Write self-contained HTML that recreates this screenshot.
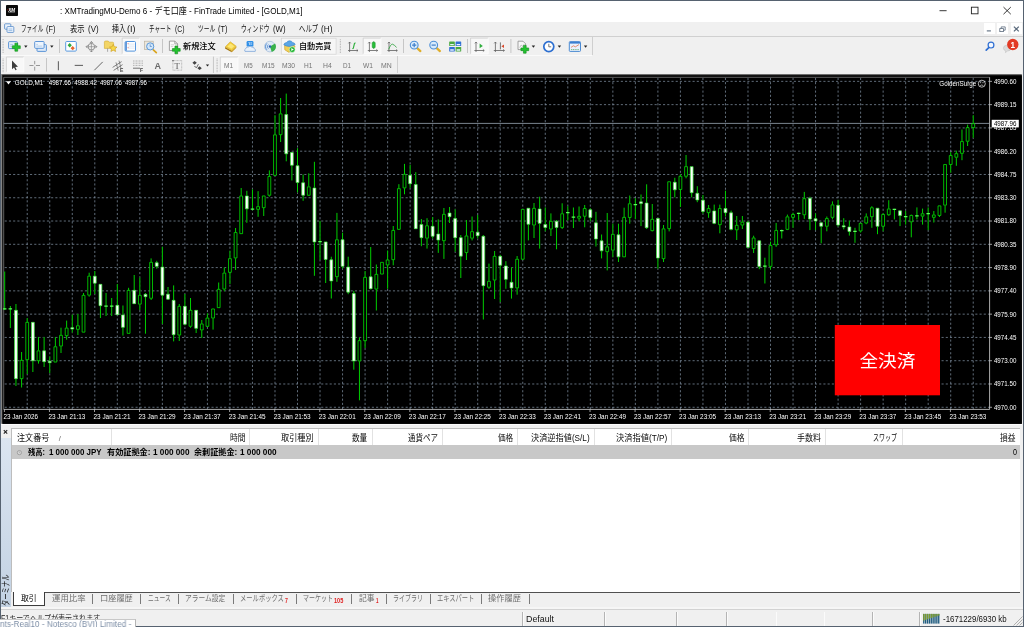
<!DOCTYPE html>
<html lang="ja"><head><meta charset="utf-8"><title>MT4</title>
<style>
html,body{margin:0;padding:0;}
body{width:1024px;height:627px;position:relative;overflow:hidden;background:#566270;font-family:"Liberation Sans","Noto Sans CJK JP",sans-serif;}
.t{position:absolute;white-space:nowrap;transform-origin:0 50%;}
.b{position:absolute;}
svg{position:absolute;overflow:visible;}
#w{position:absolute;left:0;top:0;width:1024px;height:627px;will-change:transform;filter:blur(0.3px);}
</style></head><body><div id="w">
<div class="b" style="left:0.00px;top:0.00px;width:1024.00px;height:627.00px;background:#566270;"></div>
<div class="b" style="left:1.00px;top:1.00px;width:1021.60px;height:21.00px;background:#ffffff;"></div>
<div class="b" style="left:1.00px;top:22.00px;width:1021.60px;height:604.30px;background:#f0f0f0;"></div>
<div class="b" style="left:6.30px;top:5.00px;width:11.30px;height:11.00px;background:#0a0a0a;border-radius:0.8px;"></div>
<svg style="left:6.3px;top:5px" width="11.4" height="11" viewBox="0 0 11.4 11"><text x="2.2" y="6.6" font-family="Liberation Sans,sans-serif" font-size="4.6" font-weight="bold" font-style="italic" fill="#fff">XM</text><rect x="2.4" y="7.5" width="6.6" height="0.5" fill="#9a9a9a"/><rect x="1.4" y="4.4" width="0.9" height="0.9" fill="#e02020"/></svg>
<span class="t" style="left:59.80px;top:3.76px;font-size:9.3px;line-height:14.88px;color:#000;transform:scaleX(0.8698);">: XMTradingMU-Demo 6 - デモ口座 - FinTrade Limited - [GOLD,M1]</span>
<svg style="left:930px;top:1px" width="92" height="21" viewBox="930 1 92 21"><path d="M939.5 10.7H946.6" stroke="#222" stroke-width="0.9" fill="none"/><rect x="971.4" y="7.2" width="6.6" height="6.6" stroke="#222" stroke-width="0.9" fill="none"/><path d="M1003.5 7.1L1010.8 14.2M1010.8 7.1L1003.5 14.2" stroke="#222" stroke-width="0.9" fill="none"/></svg>
<svg style="left:4px;top:23px" width="11" height="11" viewBox="0 0 11 11"><rect x="0.6" y="0.8" width="6.2" height="5.4" rx="0.8" fill="#eaf2fb" stroke="#4f86c6" stroke-width="0.8"/><rect x="3" y="3.6" width="6.8" height="5.8" rx="0.8" fill="#f4f9ff" stroke="#4f86c6" stroke-width="0.8"/><path d="M4.4 6h4M4.4 7.6h4" stroke="#7aa7d8" stroke-width="0.7"/></svg>
<span class="t" style="left:20.80px;top:22.26px;font-size:8.8px;line-height:14.08px;color:#111;transform:scaleX(0.6306);">ファイル</span>
<span class="t" style="left:46.40px;top:22.66px;font-size:8.3px;line-height:13.28px;color:#111;transform:scaleX(0.8860);">(F)</span>
<span class="t" style="left:69.80px;top:22.26px;font-size:8.8px;line-height:14.08px;color:#111;transform:scaleX(0.8291);">表示</span>
<span class="t" style="left:87.50px;top:22.66px;font-size:8.3px;line-height:13.28px;color:#111;transform:scaleX(0.9582);">(V)</span>
<span class="t" style="left:112.00px;top:22.26px;font-size:8.8px;line-height:14.08px;color:#111;transform:scaleX(0.7837);">挿入</span>
<span class="t" style="left:126.60px;top:22.66px;font-size:8.3px;line-height:13.28px;color:#111;transform:scaleX(1.0964);">(I)</span>
<span class="t" style="left:149.00px;top:22.26px;font-size:8.8px;line-height:14.08px;color:#111;transform:scaleX(0.6352);">チャート</span>
<span class="t" style="left:174.70px;top:22.66px;font-size:8.3px;line-height:13.28px;color:#111;transform:scaleX(0.8238);">(C)</span>
<span class="t" style="left:197.50px;top:22.26px;font-size:8.8px;line-height:14.08px;color:#111;transform:scaleX(0.6514);">ツール</span>
<span class="t" style="left:218.40px;top:22.66px;font-size:8.3px;line-height:13.28px;color:#111;transform:scaleX(0.8860);">(T)</span>
<span class="t" style="left:240.80px;top:22.26px;font-size:8.8px;line-height:14.08px;color:#111;transform:scaleX(0.6500);">ウィンドウ</span>
<span class="t" style="left:273.10px;top:22.66px;font-size:8.3px;line-height:13.28px;color:#111;transform:scaleX(0.9357);">(W)</span>
<span class="t" style="left:298.75px;top:22.26px;font-size:8.8px;line-height:14.08px;color:#111;transform:scaleX(0.7290);">ヘルプ</span>
<span class="t" style="left:321.40px;top:22.66px;font-size:8.3px;line-height:13.28px;color:#111;transform:scaleX(0.9886);">(H)</span>
<div class="b" style="left:984.00px;top:23.00px;width:11.00px;height:11.00px;background:#ffffff;"></div>
<div class="b" style="left:996.90px;top:23.00px;width:11.00px;height:11.00px;background:#ffffff;"></div>
<div class="b" style="left:1010.90px;top:23.00px;width:11.00px;height:11.00px;background:#ffffff;"></div>
<svg style="left:984px;top:23px" width="38" height="11" viewBox="984 23 38 11"><path d="M986.8 30.9H990.9" stroke="#5b6b7d" stroke-width="1.1"/><rect x="999.8" y="28.6" width="3.6" height="3" fill="none" stroke="#5b6b7d" stroke-width="0.8"/><path d="M1001.2 28.4V26.9H1005.2V30.2H1003.6" fill="none" stroke="#5b6b7d" stroke-width="0.8"/><path d="M1013.9 26.6L1018.8 31.4M1018.8 26.6L1013.9 31.4" stroke="#5b6b7d" stroke-width="1.3"/></svg>
<div class="b" style="left:1.00px;top:36.20px;width:1021.60px;height:0.80px;background:#ffffff;"></div>
<div class="b" style="left:1.00px;top:35.60px;width:1021.60px;height:0.70px;background:#d0d0d0;"></div>
<div class="b" style="left:1.00px;top:54.60px;width:591.00px;height:0.70px;background:#cfcfcf;"></div>
<div class="b" style="left:1.00px;top:55.30px;width:591.00px;height:0.60px;background:#fafafa;"></div>
<div class="b" style="left:591.60px;top:37.00px;width:0.70px;height:18.00px;background:#cfcfcf;"></div>
<div class="b" style="left:397.40px;top:56.00px;width:0.70px;height:17.40px;background:#cfcfcf;"></div>
<svg style="left:0px;top:37px" width="1024" height="18" viewBox="0 37 1024 18"><rect x="2.5" y="39.20" width="1.2" height="0.8" fill="#b4b4b4"/><rect x="2.5" y="40.80" width="1.2" height="0.8" fill="#b4b4b4"/><rect x="2.5" y="42.40" width="1.2" height="0.8" fill="#b4b4b4"/><rect x="2.5" y="44.00" width="1.2" height="0.8" fill="#b4b4b4"/><rect x="2.5" y="45.60" width="1.2" height="0.8" fill="#b4b4b4"/><rect x="2.5" y="47.20" width="1.2" height="0.8" fill="#b4b4b4"/><rect x="2.5" y="48.80" width="1.2" height="0.8" fill="#b4b4b4"/><rect x="2.5" y="50.40" width="1.2" height="0.8" fill="#b4b4b4"/><rect x="2.5" y="52.00" width="1.2" height="0.8" fill="#b4b4b4"/><rect x="8.6" y="41.6" width="8.8" height="7" rx="0.8" fill="#e6f0fb" stroke="#4c8ad2" stroke-width="0.9"/><path d="M10.2 44.4h3M10.2 46.2h2" stroke="#8fb4df" stroke-width="0.7"/><path d="M14.9 43.2H17.7V45.800000000000004H20.3V48.6H17.7V51.2H14.9V48.6H12.3V45.800000000000004H14.9Z" fill="#22c22e" stroke="#138a1c" stroke-width="0.6" stroke-linejoin="round"/><path d="M24.1 45.6H27.5L25.8 47.7Z" fill="#222"/><rect x="37" y="44.6" width="9.4" height="6.8" rx="0.8" fill="#dce9f8" stroke="#4c8ad2" stroke-width="0.9"/><rect x="34.7" y="41.5" width="9.4" height="6.8" rx="0.8" fill="#eef5fd" stroke="#4c8ad2" stroke-width="0.9"/><path d="M36.3 44.4h1.5M36.3 46.1h6" stroke="#9bbbe0" stroke-width="0.7"/><path d="M50.099999999999994 45.6H53.5L51.8 47.7Z" fill="#222"/><rect x="59.05" y="39" width="0.75" height="14" fill="#b9b9b9"/><rect x="65.7" y="41.5" width="10.6" height="9.6" rx="0.9" fill="#ffffff" stroke="#5a9ae0" stroke-width="1"/><path d="M67.6 45.3L69.7 43.1L71.8 45.3L69.7 47.4Z" fill="#2fa83a"/><path d="M70.6 48.2L72.7 46L74.8 48.2L72.7 50.3Z" fill="#e8662c"/><circle cx="91.4" cy="46.7" r="3.3" fill="none" stroke="#7c7c7c" stroke-width="0.8"/><path d="M91.4 41.5V52M86.1 46.7H96.8" stroke="#8a8a8a" stroke-width="0.7"/><path d="M89.9 43L91.4 41.5L92.9 43M89.9 50.5L91.4 52L92.9 50.5M87.6 45.2L86.1 46.7L87.6 48.2M95.3 45.2L96.8 46.7L95.3 48.2" stroke="#6e6e6e" stroke-width="0.7" fill="none"/><path d="M104.4 42.2q0-1.2 1.2-1.2h2.6l1 1.2h3.4q1 0 1 1v5.2h-9.2Z" fill="#f3d565" stroke="#d2a92e" stroke-width="0.6"/><path d="M107.6 48.4v3.4" stroke="#8a8a8a" stroke-width="0.7"/><path d="M113.2 44.4l1.2 2.4 2.6.3-1.9 1.8.5 2.6-2.4-1.3-2.3 1.3.5-2.6-1.9-1.8 2.6-.3Z" fill="#f7d84a" stroke="#c9981a" stroke-width="0.6" stroke-linejoin="round"/><rect x="122.2" y="38.1" width="17.39999999999999" height="15.899999999999999" fill="#f8f8f8"/><path d="M122.2 54V38.1H139.6" fill="none" stroke="#c8c8c8" stroke-width="0.7"/><path d="M122.2 54H139.6V38.1" fill="none" stroke="#ffffff" stroke-width="0.7"/><rect x="125.1" y="41.5" width="10.4" height="9.6" rx="1" fill="#ffffff" stroke="#4a8fdc" stroke-width="0.950"/><rect x="125.5" y="42" width="1.300" height="8.6" fill="#3b7fd0"/><path d="M128.2 44.1h6.4M128.2 46.1h6.4M128.2 48.1h6.4" stroke="#c9d8ee" stroke-width="0.6"/><path d="M128.1 43.2v1M128.1 47.2v1" stroke="#e0423a" stroke-width="0.7"/><rect x="144.6" y="41.2" width="8.6" height="8.4" fill="#ece7dc" stroke="#b9b1a0" stroke-width="0.7"/><path d="M153.3 49.8L156.3 52.6" stroke="#d9a520" stroke-width="1.7" stroke-linecap="round"/><circle cx="150.2" cy="46.4" r="3.6" fill="#d3e7fa" stroke="#5a97d8" stroke-width="1"/><path d="M150.2 44.4v2.1h1.6" stroke="#4a7fbf" stroke-width="0.7" fill="none"/><rect x="162.05" y="39" width="0.75" height="14" fill="#b9b9b9"/><path d="M169.4 41.1h5.4l2.8 2.8v6.6h-8.2Z" fill="#fbfbfb" stroke="#8c8c8c" stroke-width="0.8"/><path d="M174.8 41.1v2.8h2.8" fill="none" stroke="#8c8c8c" stroke-width="0.7"/><path d="M170.8 44.8h3.4M170.8 46.6h2.4" stroke="#b5b5b5" stroke-width="0.6"/><path d="M174.95000000000002 46.0H177.65V48.55H180.20000000000002V51.25H177.65V53.8H174.95000000000002V51.25H172.4V48.55H174.95000000000002Z" fill="#22c22e" stroke="#138a1c" stroke-width="0.6" stroke-linejoin="round"/><path d="M225.2 46.9L231.8 50.8V52.3L225 48.500Z" fill="#a87a10"/><path d="M231.800 50.800L236.300 46.400L236.400 47.700L231.800 52.300Z" fill="#c9971e"/><path d="M225.400 46.700L230.300 41.800L236.300 46.300L231.800 50.700Z" fill="#f4cf3c" stroke="#c99a1c" stroke-width="0.500" stroke-linejoin="round"/><path d="M227.400 46.500L230.500 43.400L234.200 46.200L231.500 48.800Z" fill="#fbe678"/><rect x="246.6" y="41" width="6.8" height="5.6" rx="1.2" fill="#2f8fe8"/><path d="M248.4 42.6h1.2v2.4M250.4 42.8h1.8M250.4 44.2h1.8" stroke="#fff" stroke-width="0.6" fill="none"/><path d="M245 51.4q-1.2-1.9.8-2.8q.5-2 2.6-1.6q1.6-1.7 3.4.1q2.4-.4 2.6 1.6q1.8.9.8 2.7Z" fill="#e9f1fb" stroke="#7fa7d8" stroke-width="0.8"/><circle cx="269.9" cy="46.6" r="5.3" fill="#dfeaf6" stroke="#9fb9d8" stroke-width="0.7"/><path d="M266.9 43.4a4.4 4.4 0 0 0 0 6.4M268.4 44.6a2.6 2.6 0 0 0 0 4" stroke="#3e7ecb" stroke-width="0.8" fill="none"/><path d="M270 46.4L275 43.4A5.4 5.4 0 0 1 271.6 51.8Z" fill="#39b24a"/><circle cx="270" cy="46.5" r="1.2" fill="#2b62b0"/><rect x="281.3" y="38.2" width="54.8" height="16" fill="#f6f6f6" stroke="#d4d4d4" stroke-width="0.7"/><path d="M284.6 45.4l5-1.4 5.4 2-1.2 5-5.2 1.2-3.8-2.4Z" fill="#f1cf55" stroke="#c79b1e" stroke-width="0.6"/><path d="M283.8 44.8q.4-2.2 3-2.4q.6-1.6 2.8-1.6q2.2 0 2.8 1.6q2.4.2 2.8 2.2q-2.8 1.8-5.8 1.8q-3 0-5.600-1.600Z" fill="#5aa6e6" stroke="#2f7fcb" stroke-width="0.6"/><circle cx="292.2" cy="49.6" r="2.9" fill="#21b532" stroke="#e8f8e8" stroke-width="0.6"/><path d="M291.3 48.100v3l2.500-1.500Z" fill="#fff"/><rect x="339.8" y="39.40" width="1.2" height="0.8" fill="#b4b4b4"/><rect x="339.8" y="41.00" width="1.2" height="0.8" fill="#b4b4b4"/><rect x="339.8" y="42.60" width="1.2" height="0.8" fill="#b4b4b4"/><rect x="339.8" y="44.20" width="1.2" height="0.8" fill="#b4b4b4"/><rect x="339.8" y="45.80" width="1.2" height="0.8" fill="#b4b4b4"/><rect x="339.8" y="47.40" width="1.2" height="0.8" fill="#b4b4b4"/><rect x="339.8" y="49.00" width="1.2" height="0.8" fill="#b4b4b4"/><rect x="339.8" y="50.60" width="1.2" height="0.8" fill="#b4b4b4"/><rect x="339.8" y="52.20" width="1.2" height="0.8" fill="#b4b4b4"/><path d="M349.6 42V52M348 50.5H358" stroke="#606060" stroke-width="0.8" fill="none"/><path d="M348.4 43.4L349.6 42L350.8 43.4M356.7 49.4L358 50.5L356.7 51.6" stroke="#606060" stroke-width="0.7" fill="none"/><path d="M353.2 48.600L354.600 43" stroke="#2fae3c" stroke-width="1.1"/><path d="M352.2 48.600h1.200M354.600 43h1.200" stroke="#2fae3c" stroke-width="0.8"/><rect x="363.2" y="38.1" width="17.80000000000001" height="15.899999999999999" fill="#f8f8f8"/><path d="M363.2 54V38.1H381" fill="none" stroke="#c8c8c8" stroke-width="0.7"/><path d="M363.2 54H381V38.1" fill="none" stroke="#ffffff" stroke-width="0.7"/><path d="M369.40000000000003 42V52M367.8 50.5H377.7" stroke="#606060" stroke-width="0.8" fill="none"/><path d="M368.2 43.4L369.40000000000003 42L370.6 43.4M376.4 49.4L377.7 50.5L376.4 51.6" stroke="#606060" stroke-width="0.7" fill="none"/><path d="M373.7 41.3v7.600" stroke="#1e8d2b" stroke-width="0.8"/><rect x="372.200" y="42.3" width="3" height="5.400" rx="0.5" fill="#27c038" stroke="#16902a" stroke-width="0.5"/><path d="M389.0 42V52M387.4 50.5H397.3" stroke="#606060" stroke-width="0.8" fill="none"/><path d="M387.79999999999995 43.4L389.0 42L390.2 43.4M396.0 49.4L397.3 50.5L396.0 51.6" stroke="#606060" stroke-width="0.7" fill="none"/><path d="M388.600 49.400Q391 43.600 392.600 44.200T396.600 47.400" stroke="#3aa648" stroke-width="0.9" fill="none"/><rect x="403.15" y="39" width="0.75" height="14" fill="#b9b9b9"/><path d="M417.2 48.1L420.4 51.1" stroke="#dfae2c" stroke-width="2.2" stroke-linecap="round"/><circle cx="414.2" cy="45.1" r="3.9" fill="#d8ebfb" stroke="#4d8fd6" stroke-width="1.1"/><path d="M412.09999999999997 45.1H416.3M414.2 43.0V47.2" stroke="#3f7fca" stroke-width="1.2"/><path d="M436.7 48.1L439.9 51.1" stroke="#dfae2c" stroke-width="2.2" stroke-linecap="round"/><circle cx="433.7" cy="45.1" r="3.9" fill="#d8ebfb" stroke="#4d8fd6" stroke-width="1.1"/><path d="M431.59999999999997 45.1H435.8" stroke="#3f7fca" stroke-width="1.2"/><rect x="449.200" y="41.500" width="5.600" height="4.600" rx="0.6" fill="#48a83e"/><rect x="455.600" y="41.500" width="5.600" height="4.600" rx="0.6" fill="#2f6fd2"/><rect x="449.200" y="46.900" width="5.600" height="4.600" rx="0.6" fill="#2f6fd2"/><rect x="455.600" y="46.900" width="5.600" height="4.600" rx="0.6" fill="#48a83e"/><path d="M450.200 44.600h3.600M456.600 44.600h3.600M450.200 50h3.600M456.600 50h3.600" stroke="#e8f2ff" stroke-width="1.300"/><rect x="467.15" y="39" width="0.75" height="14" fill="#b9b9b9"/><rect x="470.6" y="38.1" width="17.599999999999966" height="15.899999999999999" fill="#f8f8f8"/><path d="M470.6 54V38.1H488.2" fill="none" stroke="#c8c8c8" stroke-width="0.7"/><path d="M470.6 54H488.2V38.1" fill="none" stroke="#ffffff" stroke-width="0.7"/><path d="M476.0 42V52M474.4 50.5H484.2" stroke="#606060" stroke-width="0.8" fill="none"/><path d="M474.79999999999995 43.4L476.0 42L477.2 43.4M482.9 49.4L484.2 50.5L482.9 51.6" stroke="#606060" stroke-width="0.7" fill="none"/><path d="M479.600 43.600v4.600l3.200-2.300Z" fill="#2fae3c"/><path d="M495.40000000000003 42V52M493.8 50.5H504.4" stroke="#606060" stroke-width="0.8" fill="none"/><path d="M494.2 43.4L495.40000000000003 42L496.6 43.4M503.09999999999997 49.4L504.4 50.5L503.09999999999997 51.6" stroke="#606060" stroke-width="0.7" fill="none"/><path d="M500.400 42.400v7" stroke="#555" stroke-width="0.800"/><path d="M504 44.600l-2.600 1.700 2.600 1.700Z" fill="#d9482b"/><rect x="510.54999999999995" y="39" width="0.75" height="14" fill="#b9b9b9"/><path d="M518 41.200h5l2.600 2.600v5.800h-7.600Z" fill="#f7f7f7" stroke="#8c8c8c" stroke-width="0.800"/><path d="M519.600 47.600l1.600-2.600 1.400 1.400 1.600-2.200" stroke="#9a9a9a" stroke-width="0.600" fill="none"/><path d="M523.4499999999999 45.4H526.15V47.949999999999996H528.6999999999999V50.65H526.15V53.199999999999996H523.4499999999999V50.65H520.9V47.949999999999996H523.4499999999999Z" fill="#22c22e" stroke="#138a1c" stroke-width="0.6" stroke-linejoin="round"/><path d="M531.6999999999999 45.6H535.1L533.4 47.7Z" fill="#222"/><circle cx="548.800" cy="46.600" r="5" fill="#ffffff" stroke="#2d6fd0" stroke-width="1.700"/><path d="M548.800 43.800v3h2.400" stroke="#555" stroke-width="0.800" fill="none"/><path d="M557.6999999999999 45.6H561.1L559.4 47.7Z" fill="#222"/><rect x="569.300" y="41.600" width="11.200" height="9.800" rx="0.800" fill="#eaf2fc" stroke="#4c8ad2" stroke-width="1"/><rect x="569.800" y="42" width="10.200" height="1.600" fill="#3b7fd0"/><path d="M571 47.400l2.400-1.600 2 1 3.600-2.200" stroke="#e0663a" stroke-width="0.700" fill="none"/><path d="M571 49.600h8" stroke="#58a868" stroke-width="0.800" stroke-dasharray="1.200 0.600"/><path d="M583.9 45.6H587.3000000000001L585.6 47.7Z" fill="#222"/><path d="M986.200 50.200L989 47.400" stroke="#2f6fd2" stroke-width="1.700" stroke-linecap="round"/><circle cx="991" cy="45.100" r="2.900" fill="#f4f8ff" stroke="#2f6fd2" stroke-width="1.200"/><path d="M1003.400 48.200q0-3 3.600-3q3.800 0 3.800 3q0 2.800-3.400 2.900l-2 1.600l.3-1.900q-2.300-.6-2.300-2.600Z" fill="#dcdcdc" stroke="#bdbdbd" stroke-width="0.500"/><circle cx="1012.800" cy="44.500" r="5.700" fill="#e23a24"/></svg>
<span class="t" style="left:1010.500px;top:40.900px;font-size:8.200px;line-height:10px;color:#fff;font-weight:bold;">1</span>
<span class="t" style="left:183.00px;top:39.78px;font-size:8.4px;line-height:13.44px;color:#000;transform:scaleX(0.9761);font-weight:500;">新規注文</span>
<span class="t" style="left:298.90px;top:39.78px;font-size:8.4px;line-height:13.44px;color:#000;transform:scaleX(0.9701);font-weight:500;">自動売買</span>
<svg style="left:0px;top:56px" width="400" height="18" viewBox="0 56 400 18"><rect x="2.5" y="58.60" width="1.2" height="0.8" fill="#b4b4b4"/><rect x="2.5" y="60.20" width="1.2" height="0.8" fill="#b4b4b4"/><rect x="2.5" y="61.80" width="1.2" height="0.8" fill="#b4b4b4"/><rect x="2.5" y="63.40" width="1.2" height="0.8" fill="#b4b4b4"/><rect x="2.5" y="65.00" width="1.2" height="0.8" fill="#b4b4b4"/><rect x="2.5" y="66.60" width="1.2" height="0.8" fill="#b4b4b4"/><rect x="2.5" y="68.20" width="1.2" height="0.8" fill="#b4b4b4"/><rect x="2.5" y="69.80" width="1.2" height="0.8" fill="#b4b4b4"/><rect x="2.5" y="71.40" width="1.2" height="0.8" fill="#b4b4b4"/><rect x="6.4" y="57" width="17.4" height="15" fill="#f8f8f8"/><path d="M6.4 72V57H23.8" fill="none" stroke="#c8c8c8" stroke-width="0.7"/><path d="M6.4 72H23.8V57" fill="none" stroke="#ffffff" stroke-width="0.7"/><path d="M12 60.500V69.200L14 67.400L15.500 70.300L16.700 69.700L15.300 66.900L18 66.700Z" fill="#3d3d3d"/><path d="M34.700 60.900V64.300M34.700 66.700V70.600M29.400 65.500H33.500M35.900 65.500H40" stroke="#808080" stroke-width="0.800"/><rect x="46.05" y="58" width="0.75" height="13.599999999999994" fill="#b9b9b9"/><path d="M58.400 61.200V70.200" stroke="#666" stroke-width="1.100"/><path d="M74.700 65.400H83" stroke="#666" stroke-width="1.100"/><path d="M94.400 70.200L102.700 61.900" stroke="#666" stroke-width="1"/><path d="M112.600 67.400L121.600 61.600M113.600 70.400L122.600 64.600" stroke="#666" stroke-width="0.800"/><path d="M116 62.400L118.200 70.600M119 60.600L121 68.400" stroke="#666" stroke-width="0.700"/><text x="119.900" y="71.600" font-size="5" font-weight="bold" fill="#444" font-family="Liberation Sans,sans-serif">E</text><path d="M133 61h10M133 63.200h10M133 65.400h10" stroke="#9a9a9a" stroke-width="0.700" stroke-dasharray="1 0.500"/><path d="M133 68.200h7" stroke="#666" stroke-width="0.900"/><text x="139.900" y="71.500" font-size="5" font-weight="bold" fill="#444" font-family="Liberation Sans,sans-serif">F</text><rect x="172.900" y="60.600" width="8.800" height="9.600" fill="none" stroke="#8a8a8a" stroke-width="0.600" stroke-dasharray="0.800 0.600"/><rect x="172.300" y="60" width="1.300" height="1.300" fill="#666"/><path d="M192.400 62.800L194.600 60.900L196.800 62.800L194.600 64.700ZM197.400 68.200L199.600 66.300L201.800 68.200L199.600 70.100Z" fill="#444"/><path d="M194.400 66.400l2.200 1.200 1.800-3.400" stroke="#444" stroke-width="0.800" fill="none"/><path d="M205.8 64.4H209.2L207.5 66.5Z" fill="#222"/><rect x="212.95000000000002" y="56.6" width="0.75" height="16.4" fill="#b9b9b9"/><rect x="216.5" y="58.60" width="1.2" height="0.8" fill="#b4b4b4"/><rect x="216.5" y="60.20" width="1.2" height="0.8" fill="#b4b4b4"/><rect x="216.5" y="61.80" width="1.2" height="0.8" fill="#b4b4b4"/><rect x="216.5" y="63.40" width="1.2" height="0.8" fill="#b4b4b4"/><rect x="216.5" y="65.00" width="1.2" height="0.8" fill="#b4b4b4"/><rect x="216.5" y="66.60" width="1.2" height="0.8" fill="#b4b4b4"/><rect x="216.5" y="68.20" width="1.2" height="0.8" fill="#b4b4b4"/><rect x="216.5" y="69.80" width="1.2" height="0.8" fill="#b4b4b4"/><rect x="216.5" y="71.40" width="1.2" height="0.8" fill="#b4b4b4"/><rect x="220.3" y="57" width="17.69999999999999" height="15" fill="#f8f8f8"/><path d="M220.3 72V57H238" fill="none" stroke="#c8c8c8" stroke-width="0.7"/><path d="M220.3 72H238V57" fill="none" stroke="#ffffff" stroke-width="0.7"/></svg>
<span class="t" style="left:154.400px;top:60.700px;font-size:9px;line-height:11px;color:#6a6a6a;font-weight:bold;">A</span>
<span class="t" style="left:174.600px;top:61px;font-size:8.500px;line-height:11px;color:#555;font-family:'Liberation Serif',serif;">T</span>
<span class="t" style="left:224.20px;top:60.40px;font-size:7.5px;line-height:12.0px;color:#747474;transform:scaleX(0.8732);">M1</span>
<span class="t" style="left:244.20px;top:60.40px;font-size:7.5px;line-height:12.0px;color:#747474;transform:scaleX(0.8252);">M5</span>
<span class="t" style="left:262.10px;top:60.40px;font-size:7.5px;line-height:12.0px;color:#747474;transform:scaleX(0.8634);">M15</span>
<span class="t" style="left:281.80px;top:60.40px;font-size:7.5px;line-height:12.0px;color:#747474;transform:scaleX(0.8976);">M30</span>
<span class="t" style="left:303.80px;top:60.40px;font-size:7.5px;line-height:12.0px;color:#747474;transform:scaleX(0.8756);">H1</span>
<span class="t" style="left:322.90px;top:60.40px;font-size:7.5px;line-height:12.0px;color:#747474;transform:scaleX(0.9068);">H4</span>
<span class="t" style="left:343.40px;top:60.40px;font-size:7.5px;line-height:12.0px;color:#747474;transform:scaleX(0.8443);">D1</span>
<span class="t" style="left:362.60px;top:60.40px;font-size:7.5px;line-height:12.0px;color:#747474;transform:scaleX(0.8889);">W1</span>
<span class="t" style="left:381.40px;top:60.40px;font-size:7.5px;line-height:12.0px;color:#747474;transform:scaleX(0.9167);">MN</span>
<svg style="left:0;top:0" width="1024" height="627" viewBox="0 0 1024 627"><rect x="1.2" y="74.100" width="1020.600" height="349.700" fill="#6a6a6a"/><rect x="2.100" y="74.900" width="1019.700" height="348.900" fill="#1c1c1c"/><rect x="2.900" y="75.700" width="1018.900" height="348.100" fill="#000"/><path d="M27.22 77.89999999999999V409.4M49.75 77.89999999999999V409.4M72.27 77.89999999999999V409.4M94.80 77.89999999999999V409.4M117.32 77.89999999999999V409.4M139.84 77.89999999999999V409.4M162.37 77.89999999999999V409.4M184.89 77.89999999999999V409.4M207.42 77.89999999999999V409.4M229.94 77.89999999999999V409.4M252.46 77.89999999999999V409.4M274.99 77.89999999999999V409.4M297.51 77.89999999999999V409.4M320.04 77.89999999999999V409.4M342.56 77.89999999999999V409.4M365.08 77.89999999999999V409.4M387.61 77.89999999999999V409.4M410.13 77.89999999999999V409.4M432.66 77.89999999999999V409.4M455.18 77.89999999999999V409.4M477.70 77.89999999999999V409.4M500.23 77.89999999999999V409.4M522.75 77.89999999999999V409.4M545.28 77.89999999999999V409.4M567.80 77.89999999999999V409.4M590.32 77.89999999999999V409.4M612.85 77.89999999999999V409.4M635.37 77.89999999999999V409.4M657.90 77.89999999999999V409.4M680.42 77.89999999999999V409.4M702.94 77.89999999999999V409.4M725.47 77.89999999999999V409.4M747.99 77.89999999999999V409.4M770.52 77.89999999999999V409.4M793.04 77.89999999999999V409.4M815.56 77.89999999999999V409.4M838.09 77.89999999999999V409.4M860.61 77.89999999999999V409.4M883.14 77.89999999999999V409.4M905.66 77.89999999999999V409.4M928.18 77.89999999999999V409.4M950.71 77.89999999999999V409.4M973.23 77.89999999999999V409.4M4.7 81.35H989.6M4.7 104.63H989.6M4.7 127.91H989.6M4.7 151.19H989.6M4.7 174.47H989.6M4.7 197.75H989.6M4.7 221.03H989.6M4.7 244.31H989.6M4.7 267.59H989.6M4.7 290.87H989.6M4.7 314.15H989.6M4.7 337.43H989.6M4.7 360.71H989.6M4.7 383.99H989.6M4.7 407.27H989.6" stroke="#8696a9" stroke-width="0.720" stroke-dasharray="2.11 2.11" fill="none"/><path d="M3.7 409.4V77.3H989.6" stroke="#8a8a8a" stroke-width="0.700" fill="none"/><path d="M3.7 409.4H989.6V77.3" stroke="#d8d8d8" stroke-width="0.800" fill="none"/><path d="M989.6 81.35h2.400M989.6 104.63h2.400M989.6 127.91h2.400M989.6 151.19h2.400M989.6 174.47h2.400M989.6 197.75h2.400M989.6 221.03h2.400M989.6 244.31h2.400M989.6 267.59h2.400M989.6 290.87h2.400M989.6 314.15h2.400M989.6 337.43h2.400M989.6 360.71h2.400M989.6 383.99h2.400M989.6 407.27h2.400M4.40 409.4v2.600M49.45 409.4v2.600M94.50 409.4v2.600M139.54 409.4v2.600M184.59 409.4v2.600M229.64 409.4v2.600M274.69 409.4v2.600M319.74 409.4v2.600M364.78 409.4v2.600M409.83 409.4v2.600M454.88 409.4v2.600M499.93 409.4v2.600M544.98 409.4v2.600M590.02 409.4v2.600M635.07 409.4v2.600M680.12 409.4v2.600M725.17 409.4v2.600M770.22 409.4v2.600M815.26 409.4v2.600M860.31 409.4v2.600M905.36 409.4v2.600M950.41 409.4v2.600" stroke="#d0d0d0" stroke-width="0.750" fill="none"/><path d="M3.7 123.400H989.6" stroke="#a0aebd" stroke-width="0.760" fill="none"/><path d="M4.70 271.5V310M10.33 306V328M15.96 304V310M15.96 379V386M21.59 352V360M21.59 379V387.5M27.22 318V322M27.22 360V374M32.86 361V372M38.49 337V350.5M38.49 361V363.6M44.12 337V350.5M44.12 362V367M49.75 356.5V361M49.75 363V373M55.38 337V346.4M61.01 327.7V335M61.01 346.4V353M66.64 320.6V327.7M66.64 336V339.7M72.27 314.6V327.3M72.27 329.4V332.5M77.90 314V325.4M77.90 329.7V335M83.53 293V295M89.17 272.7V275.8M89.17 295.5V296.7M94.80 271V275.8M94.80 283.5V294M100.43 306V318M106.06 293V316M111.69 298V316M117.32 284V305M122.95 305.5V314.6M122.95 327.7V335.6M128.58 287.8V290M134.21 275V290M139.84 277.5V295M139.84 304.5V310M145.47 293V294M145.47 297V333.7M151.11 258.4V262M151.11 298.6V300M156.74 260.8V262.4M156.74 266.7V268.7M162.37 246.8V266.7M162.37 295.5V324M168.00 287V293.8M168.00 299.5V300M173.63 285.4V300M173.63 335V341.4M179.26 304V306M179.26 335.4V341M184.89 294V306M184.89 324.6V325.4M190.52 298V310M190.52 326.6V327.8M196.15 328.7V333M201.78 320V323.6M201.78 330.3V338M207.42 313.3V317.7M207.42 326.7V327M213.05 318.4V329.6M218.68 282.5V289M224.31 267.4V272.7M224.31 289.4V291.3M229.94 250.7V258.3M229.94 272.7V284M235.57 228V232.2M235.57 258.3V270M241.20 188V195.6M246.83 190.8V195.6M246.83 209.2V222.8M252.46 189.3V210.3M258.10 191.2V206.3M258.10 209.7V216.8M263.73 208V216M269.36 170.4V176.2M269.36 195.6V196.7M274.99 115.2V134.5M280.62 98V113.5M280.62 135V142M286.25 93.6V114.2M286.25 154.2V161.3M291.88 165.6V180.5M297.51 148.2V165.4M297.51 182.9V192.4M303.14 174.5V182.4M303.14 195.6V200.8M308.77 173.3V186.5M308.77 195.6V196M314.41 161.8V187.7M314.41 242.3V275.8M320.04 220.8V260M325.67 259.8V283M331.30 256.7V259.5M331.30 281.3V298.5M336.93 212.9V239.4M336.93 277V281.8M342.56 232.7V239.4M342.56 266.7V268.6M348.19 256.7V266.7M348.19 292.5V294.2M353.82 290.8V293.2M353.82 361.3V369.7M359.45 337.4V340.3M359.45 361.3V400.3M365.08 271V277M365.08 341V348M370.71 247V276.5M370.71 289V289.4M376.35 264.5V274M376.35 289.4V310.5M387.61 250.5V259.6M387.61 265.3V288.8M393.24 226V230.1M393.24 260V265.3M398.87 184.2V188.3M398.87 229.7V230M404.50 163.9V174M404.50 188.3V194.3M410.13 164.8V175M410.13 184V187.8M415.76 172.2V184.2M421.39 219V224.2M421.39 238V246.2M427.03 218.2V225.4M427.03 238.5V248.6M432.66 217V226M432.66 236.6V238.5M438.29 219.4V233.7M438.29 240.4V252.9M443.92 208V214M443.92 241V258.9M449.55 207V212.7M449.55 217V223M455.18 209.3V218.2M455.18 238V251.7M460.81 235V237.3M460.81 256.5V278M466.44 220V235.6M466.44 252.9V260M472.07 216.5V231.3M472.07 238.5V240.4M477.70 215V231.8M477.70 236V238.5M483.33 235V236M483.33 286V319.5M488.97 263.6V281M488.97 287.6V288.8M494.60 251V256M494.60 280.4V299M500.23 254.8V256M500.23 265.6V302M505.86 261.2V265.6M505.86 279.7V288.8M511.49 267.2V282M511.49 288.3V298.6M517.12 256V258.9M517.12 288.3V294.7M528.38 224.6V240.4M534.01 203V208M534.01 225.4V238M539.65 196.7V208.6M539.65 223.7V248.6M545.28 207.4V224.2M545.28 227.8V231.3M550.91 213.4V221M550.91 229.4V236M556.54 220V221M556.54 227.8V249.3M562.17 203.3V213.4M562.17 227.8V229M567.80 206.2V220.6M573.43 207.5V228M579.06 206.5V216M579.06 218.5V221.3M584.69 205V208.2M584.69 216.6V227.3M590.32 208.2V209.4M590.32 217.8V221.3M595.96 211.8V222.5M595.96 239.3V246.5M601.59 234.5V240.5M601.59 251.2V258.4M607.22 213V246.5M607.22 252V270.4M612.85 223.7V234M612.85 250.5V257.2M618.48 223.7V234.5M618.48 257.2V262M624.11 207.7V217M629.74 195.5V203.4M629.74 217.8V223.7M635.37 198.1V219M641.00 194.5V201.5M641.00 203.9V226.1M646.63 184.3V202.7M646.63 228V229M652.27 204V219M652.27 231V231.4M657.90 258.4V268.7M663.53 225V228.5M663.53 259V262M669.16 229V231.4M674.79 177.8V181.9M674.79 190.2V197.4M680.42 174.2V175.9M680.42 189.8V207M686.05 155V166.3M686.05 176.6V178.3M691.68 193V197.4M697.31 186.2V193M697.31 200.3V202.2M702.94 195V199.8M702.94 211.8V213.7M708.58 205V208.2M708.58 213V217.8M714.21 204.6V210.6M714.21 223.7V224.2M719.84 204.6V208.2M719.84 225V233.3M725.47 190.7V208.2M725.47 213V216.6M731.10 210.6V212.5M731.10 229.7V230.4M736.73 216V225M736.73 230.2V240M742.36 216V221.8M742.36 225.4V229M747.99 220.9V221.8M747.99 247.7V248.1M753.62 235.7V237.6M753.62 248.9V253M759.25 240V240.5M759.25 266.8V269.2M764.89 257.7V283.5M770.52 241.6V245.2M770.52 266.7V269.6M776.15 223V230.1M776.15 245.2V246.9M781.78 229.5V238.5M787.41 214.6V216.5M787.41 229.7V230.1M793.04 212.7V214.1M793.04 217.7V227.8M798.67 212.7V219.9M804.30 191.9V198.3M804.30 215.1V218.9M809.93 196.7V197.8M809.93 219.4V230.1M815.56 213.4V218.4M815.56 221.3V230.1M821.20 221.8V222.5M821.20 226.6V243.3M826.83 216.5V218.2M826.83 226.6V231.3M832.46 201.4V204.5M832.46 217.7V219.4M838.09 199.8V205M838.09 225.4V226.6M843.72 218.2V225.4M843.72 227.3V229.4M849.35 220.6V226.6M849.35 231.8V235.6M854.98 227.8V242.8M860.61 231.3V232.5M866.24 213.4V216.5M866.24 223.4V224.2M871.87 206.2V207.4M871.87 217V227.8M877.51 226.6V234.2M883.14 213.4V214.1M883.14 226.6V231.3M888.77 200.2V208.6M888.77 215.1V215.8M894.40 208.8V219.4M900.03 215.8V226.1M905.66 211V224.6M911.29 214.6V215.1M911.29 222.2V237.3M916.92 207.4V219.4M922.55 208.6V213.4M922.55 216.5V224.6M928.18 207.4V230.1M933.82 211V214.6M933.82 217.7V222.5M939.45 215.8V217M945.08 205.5V212.7M950.71 152.1V155.2M950.71 164.8V172.7M956.34 150.7V153.3M956.34 157.6V165.8M961.97 129.5V141.2M961.97 153.7V160.2M967.60 124.6V127.3M967.60 141.6V146M973.23 115.2V123.3M973.23 127.9V137.8" stroke="#000" stroke-width="1.500" fill="none"/><path d="M4.70 271.5V310M10.33 306V328M15.96 304V310M15.96 379V386M21.59 352V360M21.59 379V387.5M27.22 318V322M27.22 360V374M32.86 361V372M38.49 337V350.5M38.49 361V363.6M44.12 337V350.5M44.12 362V367M49.75 356.5V361M49.75 363V373M55.38 337V346.4M61.01 327.7V335M61.01 346.4V353M66.64 320.6V327.7M66.64 336V339.7M72.27 314.6V327.3M72.27 329.4V332.5M77.90 314V325.4M77.90 329.7V335M83.53 293V295M89.17 272.7V275.8M89.17 295.5V296.7M94.80 271V275.8M94.80 283.5V294M100.43 306V318M106.06 293V316M111.69 298V316M117.32 284V305M122.95 305.5V314.6M122.95 327.7V335.6M128.58 287.8V290M134.21 275V290M139.84 277.5V295M139.84 304.5V310M145.47 293V294M145.47 297V333.7M151.11 258.4V262M151.11 298.6V300M156.74 260.8V262.4M156.74 266.7V268.7M162.37 246.8V266.7M162.37 295.5V324M168.00 287V293.8M168.00 299.5V300M173.63 285.4V300M173.63 335V341.4M179.26 304V306M179.26 335.4V341M184.89 294V306M184.89 324.6V325.4M190.52 298V310M190.52 326.6V327.8M196.15 328.7V333M201.78 320V323.6M201.78 330.3V338M207.42 313.3V317.7M207.42 326.7V327M213.05 318.4V329.6M218.68 282.5V289M224.31 267.4V272.7M224.31 289.4V291.3M229.94 250.7V258.3M229.94 272.7V284M235.57 228V232.2M235.57 258.3V270M241.20 188V195.6M246.83 190.8V195.6M246.83 209.2V222.8M252.46 189.3V210.3M258.10 191.2V206.3M258.10 209.7V216.8M263.73 208V216M269.36 170.4V176.2M269.36 195.6V196.7M274.99 115.2V134.5M280.62 98V113.5M280.62 135V142M286.25 93.6V114.2M286.25 154.2V161.3M291.88 165.6V180.5M297.51 148.2V165.4M297.51 182.9V192.4M303.14 174.5V182.4M303.14 195.6V200.8M308.77 173.3V186.5M308.77 195.6V196M314.41 161.8V187.7M314.41 242.3V275.8M320.04 220.8V260M325.67 259.8V283M331.30 256.7V259.5M331.30 281.3V298.5M336.93 212.9V239.4M336.93 277V281.8M342.56 232.7V239.4M342.56 266.7V268.6M348.19 256.7V266.7M348.19 292.5V294.2M353.82 290.8V293.2M353.82 361.3V369.7M359.45 337.4V340.3M359.45 361.3V400.3M365.08 271V277M365.08 341V348M370.71 247V276.5M370.71 289V289.4M376.35 264.5V274M376.35 289.4V310.5M387.61 250.5V259.6M387.61 265.3V288.8M393.24 226V230.1M393.24 260V265.3M398.87 184.2V188.3M398.87 229.7V230M404.50 163.9V174M404.50 188.3V194.3M410.13 164.8V175M410.13 184V187.8M415.76 172.2V184.2M421.39 219V224.2M421.39 238V246.2M427.03 218.2V225.4M427.03 238.5V248.6M432.66 217V226M432.66 236.6V238.5M438.29 219.4V233.7M438.29 240.4V252.9M443.92 208V214M443.92 241V258.9M449.55 207V212.7M449.55 217V223M455.18 209.3V218.2M455.18 238V251.7M460.81 235V237.3M460.81 256.5V278M466.44 220V235.6M466.44 252.9V260M472.07 216.5V231.3M472.07 238.5V240.4M477.70 215V231.8M477.70 236V238.5M483.33 235V236M483.33 286V319.5M488.97 263.6V281M488.97 287.6V288.8M494.60 251V256M494.60 280.4V299M500.23 254.8V256M500.23 265.6V302M505.86 261.2V265.6M505.86 279.7V288.8M511.49 267.2V282M511.49 288.3V298.6M517.12 256V258.9M517.12 288.3V294.7M528.38 224.6V240.4M534.01 203V208M534.01 225.4V238M539.65 196.7V208.6M539.65 223.7V248.6M545.28 207.4V224.2M545.28 227.8V231.3M550.91 213.4V221M550.91 229.4V236M556.54 220V221M556.54 227.8V249.3M562.17 203.3V213.4M562.17 227.8V229M567.80 206.2V220.6M573.43 207.5V228M579.06 206.5V216M579.06 218.5V221.3M584.69 205V208.2M584.69 216.6V227.3M590.32 208.2V209.4M590.32 217.8V221.3M595.96 211.8V222.5M595.96 239.3V246.5M601.59 234.5V240.5M601.59 251.2V258.4M607.22 213V246.5M607.22 252V270.4M612.85 223.7V234M612.85 250.5V257.2M618.48 223.7V234.5M618.48 257.2V262M624.11 207.7V217M629.74 195.5V203.4M629.74 217.8V223.7M635.37 198.1V219M641.00 194.5V201.5M641.00 203.9V226.1M646.63 184.3V202.7M646.63 228V229M652.27 204V219M652.27 231V231.4M657.90 258.4V268.7M663.53 225V228.5M663.53 259V262M669.16 229V231.4M674.79 177.8V181.9M674.79 190.2V197.4M680.42 174.2V175.9M680.42 189.8V207M686.05 155V166.3M686.05 176.6V178.3M691.68 193V197.4M697.31 186.2V193M697.31 200.3V202.2M702.94 195V199.8M702.94 211.8V213.7M708.58 205V208.2M708.58 213V217.8M714.21 204.6V210.6M714.21 223.7V224.2M719.84 204.6V208.2M719.84 225V233.3M725.47 190.7V208.2M725.47 213V216.6M731.10 210.6V212.5M731.10 229.7V230.4M736.73 216V225M736.73 230.2V240M742.36 216V221.8M742.36 225.4V229M747.99 220.9V221.8M747.99 247.7V248.1M753.62 235.7V237.6M753.62 248.9V253M759.25 240V240.5M759.25 266.8V269.2M764.89 257.7V283.5M770.52 241.6V245.2M770.52 266.7V269.6M776.15 223V230.1M776.15 245.2V246.9M781.78 229.5V238.5M787.41 214.6V216.5M787.41 229.7V230.1M793.04 212.7V214.1M793.04 217.7V227.8M798.67 212.7V219.9M804.30 191.9V198.3M804.30 215.1V218.9M809.93 196.7V197.8M809.93 219.4V230.1M815.56 213.4V218.4M815.56 221.3V230.1M821.20 221.8V222.5M821.20 226.6V243.3M826.83 216.5V218.2M826.83 226.6V231.3M832.46 201.4V204.5M832.46 217.7V219.4M838.09 199.8V205M838.09 225.4V226.6M843.72 218.2V225.4M843.72 227.3V229.4M849.35 220.6V226.6M849.35 231.8V235.6M854.98 227.8V242.8M860.61 231.3V232.5M866.24 213.4V216.5M866.24 223.4V224.2M871.87 206.2V207.4M871.87 217V227.8M877.51 226.6V234.2M883.14 213.4V214.1M883.14 226.6V231.3M888.77 200.2V208.6M888.77 215.1V215.8M894.40 208.8V219.4M900.03 215.8V226.1M905.66 211V224.6M911.29 214.6V215.1M911.29 222.2V237.3M916.92 207.4V219.4M922.55 208.6V213.4M922.55 216.5V224.6M928.18 207.4V230.1M933.82 211V214.6M933.82 217.7V222.5M939.45 215.8V217M945.08 205.5V212.7M950.71 152.1V155.2M950.71 164.8V172.7M956.34 150.7V153.3M956.34 157.6V165.8M961.97 129.5V141.2M961.97 153.7V160.2M967.60 124.6V127.3M967.60 141.6V146M973.23 115.2V123.3M973.23 127.9V137.8" stroke="#00f400" stroke-width="0.850" fill="none"/><path d="M2.95 308.75h3.5M8.58 308.75h3.5M104.31 306.00h3.5M109.94 306.00h3.5M250.71 209.00h3.5M318.29 241.60h3.5M566.05 212.50h3.5M571.68 217.00h3.5M633.62 204.60h3.5M763.14 266.00h3.5M780.03 230.50h3.5M796.92 213.40h3.5M853.23 231.30h3.5M892.65 209.30h3.5M903.91 216.50h3.5M915.17 215.80h3.5M926.43 213.60h3.5" stroke="#58ff58" stroke-width="1.250" fill="none"/><path d="M20.19 360.35h2.80v18.30h-2.80ZM25.82 322.35h2.80v37.30h-2.80ZM37.09 350.85h2.80v9.80h-2.80ZM53.98 346.75h2.80v15.30h-2.80ZM59.61 335.35h2.80v10.70h-2.80ZM65.24 328.05h2.80v7.60h-2.80ZM76.50 325.75h2.80v3.60h-2.80ZM82.13 295.35h2.80v36.80h-2.80ZM87.77 276.15h2.80v19.00h-2.80ZM127.18 290.35h2.80v43.00h-2.80ZM138.44 295.35h2.80v8.80h-2.80ZM149.71 262.35h2.80v35.90h-2.80ZM177.86 306.35h2.80v28.70h-2.80ZM189.12 310.35h2.80v15.90h-2.80ZM200.38 323.95h2.80v6.00h-2.80ZM206.02 318.05h2.80v8.30h-2.80ZM211.65 308.95h2.80v9.10h-2.80ZM217.28 289.35h2.80v18.30h-2.80ZM222.91 273.05h2.80v16.00h-2.80ZM228.54 258.65h2.80v13.70h-2.80ZM234.17 232.55h2.80v25.40h-2.80ZM239.80 195.95h2.80v37.70h-2.80ZM256.70 206.65h2.80v2.70h-2.80ZM262.33 195.95h2.80v11.70h-2.80ZM267.96 176.55h2.80v18.70h-2.80ZM273.59 134.85h2.80v40.50h-2.80ZM279.22 113.85h2.80v20.80h-2.80ZM307.37 186.85h2.80v8.40h-2.80ZM335.53 239.75h2.80v36.90h-2.80ZM358.05 340.65h2.80v20.30h-2.80ZM363.68 277.35h2.80v63.30h-2.80ZM374.95 274.35h2.80v14.70h-2.80ZM380.58 262.35h2.80v11.70h-2.80ZM386.21 259.95h2.80v5.00h-2.80ZM391.84 230.45h2.80v29.20h-2.80ZM397.47 188.65h2.80v40.70h-2.80ZM403.10 174.35h2.80v13.60h-2.80ZM425.63 225.75h2.80v12.40h-2.80ZM442.52 214.35h2.80v26.30h-2.80ZM465.04 235.95h2.80v16.60h-2.80ZM470.67 231.65h2.80v6.50h-2.80ZM487.57 281.35h2.80v5.90h-2.80ZM493.20 256.35h2.80v23.70h-2.80ZM515.72 259.25h2.80v28.70h-2.80ZM521.35 209.35h2.80v49.90h-2.80ZM532.61 208.35h2.80v16.70h-2.80ZM549.51 221.35h2.80v7.70h-2.80ZM560.77 213.75h2.80v13.70h-2.80ZM577.66 216.35h2.80v1.80h-2.80ZM583.29 208.55h2.80v7.70h-2.80ZM605.82 246.85h2.80v4.80h-2.80ZM611.45 234.35h2.80v15.80h-2.80ZM622.71 217.35h2.80v39.50h-2.80ZM628.34 203.75h2.80v13.70h-2.80ZM650.87 219.35h2.80v11.30h-2.80ZM662.13 228.85h2.80v29.80h-2.80ZM667.76 181.75h2.80v46.90h-2.80ZM679.02 176.25h2.80v13.20h-2.80ZM684.65 166.65h2.80v9.60h-2.80ZM707.18 208.55h2.80v4.10h-2.80ZM718.44 208.55h2.80v16.10h-2.80ZM735.33 225.35h2.80v4.50h-2.80ZM740.96 222.15h2.80v2.90h-2.80ZM752.22 237.95h2.80v10.60h-2.80ZM769.12 245.55h2.80v20.80h-2.80ZM774.75 230.45h2.80v14.40h-2.80ZM786.01 216.85h2.80v12.50h-2.80ZM791.64 214.45h2.80v2.90h-2.80ZM802.90 198.65h2.80v16.10h-2.80ZM825.43 218.55h2.80v7.70h-2.80ZM831.06 204.85h2.80v12.50h-2.80ZM859.21 223.35h2.80v7.60h-2.80ZM864.84 216.85h2.80v6.20h-2.80ZM870.47 207.75h2.80v8.90h-2.80ZM881.74 214.45h2.80v11.80h-2.80ZM887.37 208.95h2.80v5.80h-2.80ZM909.89 215.45h2.80v6.40h-2.80ZM921.15 213.75h2.80v2.40h-2.80ZM932.42 214.95h2.80v2.40h-2.80ZM938.05 205.85h2.80v9.60h-2.80ZM943.68 164.55h2.80v40.60h-2.80ZM949.31 155.55h2.80v8.90h-2.80ZM954.94 153.65h2.80v3.60h-2.80ZM960.57 141.55h2.80v11.80h-2.80ZM966.20 127.65h2.80v13.60h-2.80ZM971.83 123.65h2.80v3.90h-2.80Z" stroke="#00f000" stroke-width="0.760" fill="#000"/><path d="M14.56 310.35h2.80v68.30h-2.80ZM31.46 322.35h2.80v38.30h-2.80ZM42.72 350.85h2.80v10.80h-2.80ZM48.35 361.35h2.80v1.30h-2.80ZM70.87 327.65h2.80v1.40h-2.80ZM93.40 276.15h2.80v7.00h-2.80ZM99.03 284.35h2.80v21.30h-2.80ZM115.92 305.35h2.80v9.30h-2.80ZM121.55 314.95h2.80v12.40h-2.80ZM132.81 290.35h2.80v13.30h-2.80ZM144.07 294.35h2.80v2.30h-2.80ZM155.34 262.75h2.80v3.60h-2.80ZM160.97 267.05h2.80v28.10h-2.80ZM166.60 294.15h2.80v5.00h-2.80ZM172.23 300.35h2.80v34.30h-2.80ZM183.49 306.35h2.80v17.90h-2.80ZM194.75 310.35h2.80v18.00h-2.80ZM245.43 195.95h2.80v12.90h-2.80ZM284.85 114.55h2.80v39.30h-2.80ZM290.48 152.55h2.80v12.70h-2.80ZM296.11 165.75h2.80v16.80h-2.80ZM301.74 182.75h2.80v12.50h-2.80ZM313.01 188.05h2.80v53.90h-2.80ZM324.27 241.95h2.80v17.50h-2.80ZM329.90 259.85h2.80v21.10h-2.80ZM341.16 239.75h2.80v26.60h-2.80ZM346.79 267.05h2.80v25.10h-2.80ZM352.42 293.55h2.80v67.40h-2.80ZM369.31 276.85h2.80v11.80h-2.80ZM408.73 175.35h2.80v8.30h-2.80ZM414.36 184.55h2.80v44.10h-2.80ZM419.99 224.55h2.80v13.10h-2.80ZM431.26 226.35h2.80v9.90h-2.80ZM436.89 234.05h2.80v6.00h-2.80ZM448.15 213.05h2.80v3.60h-2.80ZM453.78 218.55h2.80v19.10h-2.80ZM459.41 237.65h2.80v18.50h-2.80ZM476.30 232.15h2.80v3.50h-2.80ZM481.94 236.35h2.80v49.30h-2.80ZM498.83 256.35h2.80v8.90h-2.80ZM504.46 265.95h2.80v13.40h-2.80ZM510.09 282.35h2.80v5.60h-2.80ZM526.98 208.25h2.80v16.00h-2.80ZM538.25 208.95h2.80v14.40h-2.80ZM543.88 224.55h2.80v2.90h-2.80ZM555.14 221.35h2.80v6.10h-2.80ZM588.92 209.75h2.80v7.70h-2.80ZM594.56 222.85h2.80v16.10h-2.80ZM600.19 240.85h2.80v10.00h-2.80ZM617.08 234.85h2.80v22.00h-2.80ZM639.60 201.85h2.80v1.70h-2.80ZM645.23 203.05h2.80v24.60h-2.80ZM656.50 218.55h2.80v39.50h-2.80ZM673.39 182.25h2.80v7.60h-2.80ZM690.28 166.65h2.80v26.00h-2.80ZM695.91 193.35h2.80v6.60h-2.80ZM701.54 200.15h2.80v11.30h-2.80ZM712.81 210.95h2.80v12.40h-2.80ZM724.07 208.55h2.80v4.10h-2.80ZM729.70 212.85h2.80v16.50h-2.80ZM746.59 222.15h2.80v25.20h-2.80ZM757.85 240.85h2.80v25.60h-2.80ZM808.53 198.15h2.80v20.90h-2.80ZM814.16 218.75h2.80v2.20h-2.80ZM819.80 222.85h2.80v3.40h-2.80ZM836.69 205.35h2.80v19.70h-2.80ZM842.32 225.75h2.80v1.20h-2.80ZM847.95 226.95h2.80v4.50h-2.80ZM876.11 208.25h2.80v18.00h-2.80ZM898.63 210.85h2.80v4.60h-2.80Z" stroke="#40f040" stroke-width="0.720" fill="#fff"/><rect x="834.800" y="325" width="105.200" height="70.300" fill="#ff0000"/><g font-family="Liberation Sans,Noto Sans CJK JP,sans-serif"><path d="M6 81.200H11L8.500 84.600Z" fill="#fff"/><text x="14.80" y="85.46" font-size="6.6" fill="#fff" textLength="28.60" lengthAdjust="spacingAndGlyphs" >GOLD,M1</text><text x="48.75" y="85.46" font-size="6.6" fill="#fff" textLength="22.25" lengthAdjust="spacingAndGlyphs" >4987.66</text><text x="74.20" y="85.46" font-size="6.6" fill="#fff" textLength="22.70" lengthAdjust="spacingAndGlyphs" >4988.42</text><text x="100.00" y="85.46" font-size="6.6" fill="#fff" textLength="21.90" lengthAdjust="spacingAndGlyphs" >4987.06</text><text x="125.00" y="85.46" font-size="6.6" fill="#fff" textLength="21.90" lengthAdjust="spacingAndGlyphs" >4987.96</text><text x="939.30" y="86.13" font-size="6.8" fill="#fff" textLength="37.00" lengthAdjust="spacingAndGlyphs" >GoldenSurge</text><circle cx="981.800" cy="83.700" r="3.500" fill="none" stroke="#fff" stroke-width="0.700"/><path d="M980.200 85.700q1.600-1.500 3.200 0" stroke="#fff" stroke-width="0.600" fill="none"/><path d="M980 82.700h1.200M982.400 82.700h1.200" stroke="#fff" stroke-width="0.700"/><text x="993.90" y="83.81" font-size="6.6" fill="#fff" textLength="22.50" lengthAdjust="spacingAndGlyphs" >4990.60</text><text x="993.90" y="107.09" font-size="6.6" fill="#fff" textLength="22.50" lengthAdjust="spacingAndGlyphs" >4989.15</text><text x="993.90" y="130.37" font-size="6.6" fill="#fff" textLength="22.50" lengthAdjust="spacingAndGlyphs" >4987.65</text><text x="993.90" y="153.65" font-size="6.6" fill="#fff" textLength="22.50" lengthAdjust="spacingAndGlyphs" >4986.20</text><text x="993.90" y="176.93" font-size="6.6" fill="#fff" textLength="22.50" lengthAdjust="spacingAndGlyphs" >4984.75</text><text x="993.90" y="200.21" font-size="6.6" fill="#fff" textLength="22.50" lengthAdjust="spacingAndGlyphs" >4983.30</text><text x="993.90" y="223.49" font-size="6.6" fill="#fff" textLength="22.50" lengthAdjust="spacingAndGlyphs" >4981.80</text><text x="993.90" y="246.77" font-size="6.6" fill="#fff" textLength="22.50" lengthAdjust="spacingAndGlyphs" >4980.35</text><text x="993.90" y="270.05" font-size="6.6" fill="#fff" textLength="22.50" lengthAdjust="spacingAndGlyphs" >4978.90</text><text x="993.90" y="293.33" font-size="6.6" fill="#fff" textLength="22.50" lengthAdjust="spacingAndGlyphs" >4977.40</text><text x="993.90" y="316.61" font-size="6.6" fill="#fff" textLength="22.50" lengthAdjust="spacingAndGlyphs" >4975.90</text><text x="993.90" y="339.89" font-size="6.6" fill="#fff" textLength="22.50" lengthAdjust="spacingAndGlyphs" >4974.45</text><text x="993.90" y="363.17" font-size="6.6" fill="#fff" textLength="22.50" lengthAdjust="spacingAndGlyphs" >4973.00</text><text x="993.90" y="386.45" font-size="6.6" fill="#fff" textLength="22.50" lengthAdjust="spacingAndGlyphs" >4971.50</text><text x="993.90" y="409.73" font-size="6.6" fill="#fff" textLength="22.50" lengthAdjust="spacingAndGlyphs" >4970.00</text><rect x="991.700" y="119.800" width="27.100" height="7.600" fill="#fff"/><text x="993.90" y="126.06" font-size="6.6" fill="#000" textLength="22.50" lengthAdjust="spacingAndGlyphs" >4987.96</text><text x="3.40" y="418.86" font-size="6.6" fill="#fff" textLength="34.60" lengthAdjust="spacingAndGlyphs" >23 Jan 2026</text><text x="48.45" y="418.86" font-size="6.6" fill="#fff" textLength="37.00" lengthAdjust="spacingAndGlyphs" >23 Jan 21:13</text><text x="93.50" y="418.86" font-size="6.6" fill="#fff" textLength="37.00" lengthAdjust="spacingAndGlyphs" >23 Jan 21:21</text><text x="138.54" y="418.86" font-size="6.6" fill="#fff" textLength="37.00" lengthAdjust="spacingAndGlyphs" >23 Jan 21:29</text><text x="183.59" y="418.86" font-size="6.6" fill="#fff" textLength="37.00" lengthAdjust="spacingAndGlyphs" >23 Jan 21:37</text><text x="228.64" y="418.86" font-size="6.6" fill="#fff" textLength="37.00" lengthAdjust="spacingAndGlyphs" >23 Jan 21:45</text><text x="273.69" y="418.86" font-size="6.6" fill="#fff" textLength="37.00" lengthAdjust="spacingAndGlyphs" >23 Jan 21:53</text><text x="318.74" y="418.86" font-size="6.6" fill="#fff" textLength="37.00" lengthAdjust="spacingAndGlyphs" >23 Jan 22:01</text><text x="363.78" y="418.86" font-size="6.6" fill="#fff" textLength="37.00" lengthAdjust="spacingAndGlyphs" >23 Jan 22:09</text><text x="408.83" y="418.86" font-size="6.6" fill="#fff" textLength="37.00" lengthAdjust="spacingAndGlyphs" >23 Jan 22:17</text><text x="453.88" y="418.86" font-size="6.6" fill="#fff" textLength="37.00" lengthAdjust="spacingAndGlyphs" >23 Jan 22:25</text><text x="498.93" y="418.86" font-size="6.6" fill="#fff" textLength="37.00" lengthAdjust="spacingAndGlyphs" >23 Jan 22:33</text><text x="543.98" y="418.86" font-size="6.6" fill="#fff" textLength="37.00" lengthAdjust="spacingAndGlyphs" >23 Jan 22:41</text><text x="589.02" y="418.86" font-size="6.6" fill="#fff" textLength="37.00" lengthAdjust="spacingAndGlyphs" >23 Jan 22:49</text><text x="634.07" y="418.86" font-size="6.6" fill="#fff" textLength="37.00" lengthAdjust="spacingAndGlyphs" >23 Jan 22:57</text><text x="679.12" y="418.86" font-size="6.6" fill="#fff" textLength="37.00" lengthAdjust="spacingAndGlyphs" >23 Jan 23:05</text><text x="724.17" y="418.86" font-size="6.6" fill="#fff" textLength="37.00" lengthAdjust="spacingAndGlyphs" >23 Jan 23:13</text><text x="769.22" y="418.86" font-size="6.6" fill="#fff" textLength="37.00" lengthAdjust="spacingAndGlyphs" >23 Jan 23:21</text><text x="814.26" y="418.86" font-size="6.6" fill="#fff" textLength="37.00" lengthAdjust="spacingAndGlyphs" >23 Jan 23:29</text><text x="859.31" y="418.86" font-size="6.6" fill="#fff" textLength="37.00" lengthAdjust="spacingAndGlyphs" >23 Jan 23:37</text><text x="904.36" y="418.86" font-size="6.6" fill="#fff" textLength="37.00" lengthAdjust="spacingAndGlyphs" >23 Jan 23:45</text><text x="949.41" y="418.86" font-size="6.6" fill="#fff" textLength="37.00" lengthAdjust="spacingAndGlyphs" >23 Jan 23:53</text><text x="887.400" y="367.300" font-size="17.500" fill="#fff" text-anchor="middle" textLength="56" lengthAdjust="spacingAndGlyphs">全決済</text></g></svg>
<div class="b" style="left:1.20px;top:423.80px;width:1020.60px;height:1.70px;background:#fbfbfb;"></div>
<div class="b" style="left:1.20px;top:437.80px;width:9.60px;height:169.70px;background:linear-gradient(#dbe5f1,#c3d2e3);"></div>
<svg style="left:1px;top:428px" width="10" height="10" viewBox="1 428 10 10"><path d="M3.800 430.200L7.200 433.600M7.200 430.200L3.800 433.600" stroke="#222" stroke-width="1.100"/></svg>
<span class="t" style="left:0.700px;top:605.900px;font-size:9px;line-height:10.400px;color:#141414;transform-origin:0 0;transform:rotate(-90deg) scaleX(0.700);">ターミナル</span>
<div class="b" style="left:10.80px;top:427.90px;width:1009.60px;height:164.60px;background:#ffffff;border-top:0.800px solid #bdbdbd;border-left:0.800px solid #bdbdbd;box-sizing:border-box;"></div>
<div class="b" style="left:11.50px;top:445.40px;width:1008.90px;height:14.00px;background:#c8c8c8;"></div>
<div class="b" style="left:111.05px;top:428.80px;width:0.70px;height:16.40px;background:#e2e2e2;"></div>
<div class="b" style="left:249.25px;top:428.80px;width:0.70px;height:16.40px;background:#e2e2e2;"></div>
<div class="b" style="left:318.15px;top:428.80px;width:0.70px;height:16.40px;background:#e2e2e2;"></div>
<div class="b" style="left:371.65px;top:428.80px;width:0.70px;height:16.40px;background:#e2e2e2;"></div>
<div class="b" style="left:441.65px;top:428.80px;width:0.70px;height:16.40px;background:#e2e2e2;"></div>
<div class="b" style="left:517.25px;top:428.80px;width:0.70px;height:16.40px;background:#e2e2e2;"></div>
<div class="b" style="left:594.05px;top:428.80px;width:0.70px;height:16.40px;background:#e2e2e2;"></div>
<div class="b" style="left:671.15px;top:428.80px;width:0.70px;height:16.40px;background:#e2e2e2;"></div>
<div class="b" style="left:747.95px;top:428.80px;width:0.70px;height:16.40px;background:#e2e2e2;"></div>
<div class="b" style="left:824.65px;top:428.80px;width:0.70px;height:16.40px;background:#e2e2e2;"></div>
<div class="b" style="left:901.55px;top:428.80px;width:0.70px;height:16.40px;background:#e2e2e2;"></div>
<span class="t" style="left:16.90px;top:431.62px;font-size:8.6px;line-height:13.76px;color:#0c0c0c;transform:scaleX(0.9392);">注文番号</span>
<span class="t" style="left:229.70px;top:431.62px;font-size:8.6px;line-height:13.76px;color:#0c0c0c;transform:scaleX(0.9010);">時間</span>
<span class="t" style="left:281.30px;top:431.62px;font-size:8.6px;line-height:13.76px;color:#0c0c0c;transform:scaleX(0.9508);">取引種別</span>
<span class="t" style="left:352.20px;top:431.62px;font-size:8.6px;line-height:13.76px;color:#0c0c0c;transform:scaleX(0.8836);">数量</span>
<span class="t" style="left:407.80px;top:431.62px;font-size:8.6px;line-height:13.76px;color:#0c0c0c;transform:scaleX(0.8694);">通貨ペア</span>
<span class="t" style="left:498.00px;top:431.62px;font-size:8.6px;line-height:13.76px;color:#0c0c0c;transform:scaleX(0.8836);">価格</span>
<span class="t" style="left:531.40px;top:431.62px;font-size:8.6px;line-height:13.76px;color:#0c0c0c;transform:scaleX(0.9514);">決済逆指値(S/L)</span>
<span class="t" style="left:615.80px;top:431.62px;font-size:8.6px;line-height:13.76px;color:#0c0c0c;transform:scaleX(0.9576);">決済指値(T/P)</span>
<span class="t" style="left:728.60px;top:431.62px;font-size:8.6px;line-height:13.76px;color:#0c0c0c;transform:scaleX(0.8952);">価格</span>
<span class="t" style="left:796.70px;top:431.62px;font-size:8.6px;line-height:13.76px;color:#0c0c0c;transform:scaleX(0.9303);">手数料</span>
<span class="t" style="left:873.40px;top:431.62px;font-size:8.6px;line-height:13.76px;color:#0c0c0c;transform:scaleX(0.7008);">スワップ</span>
<span class="t" style="left:1000.00px;top:431.62px;font-size:8.6px;line-height:13.76px;color:#0c0c0c;transform:scaleX(0.9010);">損益</span>
<span class="t" style="left:58.80px;top:432.50px;font-size:7.5px;line-height:12.0px;color:#6a6a6a;">/</span>
<svg style="left:16px;top:448px" width="8" height="9" viewBox="16 448 8 9"><circle cx="19.400" cy="452.600" r="2.100" fill="#d8d8d8" stroke="#8e8e8e" stroke-width="0.700"/><path d="M19.400 451.400v1.300h1" stroke="#8e8e8e" stroke-width="0.500" fill="none"/></svg>
<span class="t" style="left:28.00px;top:446.14px;font-size:8.2px;line-height:13.12px;color:#000;font-weight:bold;transform:scaleX(0.8896);">残高:</span>
<span class="t" style="left:48.50px;top:446.14px;font-size:8.2px;line-height:13.12px;color:#000;font-weight:bold;transform:scaleX(0.9689);">1 000 000 JPY</span>
<span class="t" style="left:106.50px;top:446.14px;font-size:8.2px;line-height:13.12px;color:#000;font-weight:bold;transform:scaleX(0.9961);">有効証拠金:</span>
<span class="t" style="left:152.50px;top:446.14px;font-size:8.2px;line-height:13.12px;color:#000;font-weight:bold;transform:scaleX(1.0017);">1 000 000</span>
<span class="t" style="left:194.30px;top:446.14px;font-size:8.2px;line-height:13.12px;color:#000;font-weight:bold;transform:scaleX(0.9915);">余剰証拠金:</span>
<span class="t" style="left:240.40px;top:446.14px;font-size:8.2px;line-height:13.12px;color:#000;font-weight:bold;transform:scaleX(1.0045);">1 000 000</span>
<span class="t" style="left:1012.60px;top:446.14px;font-size:8.2px;line-height:13.12px;color:#000;transform:scaleX(0.8767);">0</span>
<div class="b" style="left:44.00px;top:591.70px;width:976.40px;height:0.90px;background:#505050;"></div>
<div class="b" style="left:13.10px;top:591.60px;width:31.70px;height:14.20px;background:#ffffff;border:0.900px solid #3c3c3c;border-top:none;box-sizing:border-box;"></div>
<span class="t" style="left:21.00px;top:592.06px;font-size:8.3px;line-height:13.28px;color:#000;transform:scaleX(0.9452);">取引</span>
<span class="t" style="left:51.60px;top:592.06px;font-size:8.3px;line-height:13.28px;color:#6e6e6e;transform:scaleX(1.0120);">運用比率</span>
<span class="t" style="left:100.00px;top:592.06px;font-size:8.3px;line-height:13.28px;color:#6e6e6e;transform:scaleX(0.9879);">口座履歴</span>
<span class="t" style="left:148.00px;top:592.06px;font-size:8.3px;line-height:13.28px;color:#6e6e6e;transform:scaleX(0.6955);">ニュース</span>
<span class="t" style="left:185.20px;top:592.06px;font-size:8.3px;line-height:13.28px;color:#6e6e6e;transform:scaleX(0.8154);">アラーム設定</span>
<span class="t" style="left:240.30px;top:592.06px;font-size:8.3px;line-height:13.28px;color:#6e6e6e;transform:scaleX(0.7589);">メールボックス</span>
<span class="t" style="left:302.90px;top:592.06px;font-size:8.3px;line-height:13.28px;color:#6e6e6e;transform:scaleX(0.7205);">マーケット</span>
<span class="t" style="left:358.50px;top:592.06px;font-size:8.3px;line-height:13.28px;color:#6e6e6e;transform:scaleX(0.9332);">記事</span>
<span class="t" style="left:393.00px;top:592.06px;font-size:8.3px;line-height:13.28px;color:#6e6e6e;transform:scaleX(0.7229);">ライブラリ</span>
<span class="t" style="left:437.00px;top:592.06px;font-size:8.3px;line-height:13.28px;color:#6e6e6e;transform:scaleX(0.7528);">エキスパート</span>
<span class="t" style="left:488.30px;top:592.06px;font-size:8.3px;line-height:13.28px;color:#6e6e6e;transform:scaleX(0.9909);">操作履歴</span>
<div class="b" style="left:92.15px;top:593.80px;width:0.75px;height:10.40px;background:#7a7a7a;"></div>
<div class="b" style="left:139.95px;top:593.80px;width:0.75px;height:10.40px;background:#7a7a7a;"></div>
<div class="b" style="left:178.35px;top:593.80px;width:0.75px;height:10.40px;background:#7a7a7a;"></div>
<div class="b" style="left:233.15px;top:593.80px;width:0.75px;height:10.40px;background:#7a7a7a;"></div>
<div class="b" style="left:295.95px;top:593.80px;width:0.75px;height:10.40px;background:#7a7a7a;"></div>
<div class="b" style="left:350.85px;top:593.80px;width:0.75px;height:10.40px;background:#7a7a7a;"></div>
<div class="b" style="left:386.05px;top:593.80px;width:0.75px;height:10.40px;background:#7a7a7a;"></div>
<div class="b" style="left:429.95px;top:593.80px;width:0.75px;height:10.40px;background:#7a7a7a;"></div>
<div class="b" style="left:481.25px;top:593.80px;width:0.75px;height:10.40px;background:#7a7a7a;"></div>
<div class="b" style="left:528.65px;top:593.80px;width:0.75px;height:10.40px;background:#7a7a7a;"></div>
<span class="t" style="left:285.40px;top:596.06px;font-size:6.3px;line-height:10.08px;color:#e02020;font-weight:bold;transform:scaleX(0.8249);">7</span>
<span class="t" style="left:334.00px;top:596.06px;font-size:6.3px;line-height:10.08px;color:#e02020;font-weight:bold;transform:scaleX(0.8844);">105</span>
<span class="t" style="left:376.00px;top:596.06px;font-size:6.3px;line-height:10.08px;color:#e02020;font-weight:bold;transform:scaleX(0.7111);">1</span>
<div class="b" style="left:1.00px;top:606.80px;width:1021.60px;height:2.00px;background:#f6f6f6;"></div>
<div class="b" style="left:1.00px;top:608.90px;width:1021.60px;height:0.70px;background:#d2d2d2;"></div>
<span class="t" style="left:1.30px;top:611.66px;font-size:8.3px;line-height:13.28px;color:#222;transform:scaleX(0.8475);">F1キーでヘルプが表示されます</span>
<span class="t" style="left:526.00px;top:613.06px;font-size:8.3px;line-height:13.28px;color:#111;transform:scaleX(1.0648);">Default</span>
<div class="b" style="left:522.05px;top:612.40px;width:0.75px;height:13.40px;background:#b4b4b4;"></div>
<div class="b" style="left:522.80px;top:612.40px;width:0.70px;height:13.40px;background:#fbfbfb;"></div>
<div class="b" style="left:603.95px;top:612.40px;width:0.75px;height:13.40px;background:#b4b4b4;"></div>
<div class="b" style="left:604.70px;top:612.40px;width:0.70px;height:13.40px;background:#fbfbfb;"></div>
<div class="b" style="left:676.05px;top:612.40px;width:0.75px;height:13.40px;background:#b4b4b4;"></div>
<div class="b" style="left:676.80px;top:612.40px;width:0.70px;height:13.40px;background:#fbfbfb;"></div>
<div class="b" style="left:725.95px;top:612.40px;width:0.75px;height:13.40px;background:#b4b4b4;"></div>
<div class="b" style="left:726.70px;top:612.40px;width:0.70px;height:13.40px;background:#fbfbfb;"></div>
<div class="b" style="left:775.65px;top:612.40px;width:0.75px;height:13.40px;background:#b4b4b4;"></div>
<div class="b" style="left:776.40px;top:612.40px;width:0.70px;height:13.40px;background:#fbfbfb;"></div>
<div class="b" style="left:823.65px;top:612.40px;width:0.75px;height:13.40px;background:#b4b4b4;"></div>
<div class="b" style="left:824.40px;top:612.40px;width:0.70px;height:13.40px;background:#fbfbfb;"></div>
<div class="b" style="left:872.15px;top:612.40px;width:0.75px;height:13.40px;background:#b4b4b4;"></div>
<div class="b" style="left:872.90px;top:612.40px;width:0.70px;height:13.40px;background:#fbfbfb;"></div>
<div class="b" style="left:919.35px;top:612.40px;width:0.75px;height:13.40px;background:#b4b4b4;"></div>
<div class="b" style="left:920.10px;top:612.40px;width:0.70px;height:13.40px;background:#fbfbfb;"></div>
<svg style="left:922px;top:613px" width="20" height="12" viewBox="922 613 20 12"><rect x="923.10" y="613.900" width="1.350" height="9.700" fill="#1f5c80"/><rect x="923.10" y="613.900" width="1.350" height="6.60" fill="#7b9a30"/><rect x="924.97" y="613.900" width="1.350" height="9.700" fill="#1f5c80"/><rect x="924.97" y="613.900" width="1.350" height="5.99" fill="#7b9a30"/><rect x="926.84" y="613.900" width="1.350" height="9.700" fill="#1f5c80"/><rect x="926.84" y="613.900" width="1.350" height="5.38" fill="#7b9a30"/><rect x="928.71" y="613.900" width="1.350" height="9.700" fill="#1f5c80"/><rect x="928.71" y="613.900" width="1.350" height="4.77" fill="#7b9a30"/><rect x="930.58" y="613.900" width="1.350" height="9.700" fill="#1f5c80"/><rect x="930.58" y="613.900" width="1.350" height="4.16" fill="#7b9a30"/><rect x="932.45" y="613.900" width="1.350" height="9.700" fill="#1f5c80"/><rect x="932.45" y="613.900" width="1.350" height="3.55" fill="#7b9a30"/><rect x="934.32" y="613.900" width="1.350" height="9.700" fill="#1f5c80"/><rect x="934.32" y="613.900" width="1.350" height="2.94" fill="#7b9a30"/><rect x="936.19" y="613.900" width="1.350" height="9.700" fill="#1f5c80"/><rect x="936.19" y="613.900" width="1.350" height="2.33" fill="#7b9a30"/><rect x="938.06" y="613.900" width="1.350" height="9.700" fill="#1f5c80"/><rect x="938.06" y="613.900" width="1.350" height="1.72" fill="#7b9a30"/></svg>
<span class="t" style="left:943.00px;top:613.06px;font-size:8.3px;line-height:13.28px;color:#111;transform:scaleX(0.9521);">-1671229/6930 kb</span>
<svg style="left:1010px;top:614px" width="12" height="12" viewBox="1010 614 12 12"><path d="M1022.500 616.500L1013.500 625.500M1022.500 619.500L1016.500 625.500M1022.500 622.500L1019.500 625.500" stroke="#a0a0a0" stroke-width="0.800"/></svg>
<div class="b" style="left:0.00px;top:619.00px;width:136.20px;height:8.00px;background:#ffffff;border-top:0.700px solid #c8c8c8;border-right:1.500px solid #b5b5b5;box-sizing:border-box;"></div>
<span class="t" style="left:-0.30px;top:618.42px;font-size:8.6px;line-height:13.76px;color:#7d8ea6;transform:scaleX(0.9512);">nts-Real10 - Notesco (BVI) Limited -</span>
</div></body></html>
